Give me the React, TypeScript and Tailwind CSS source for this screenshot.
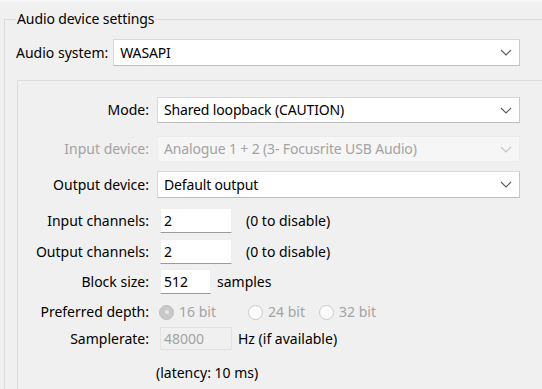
import React from "react";

const Chevron = ({ disabled }: { disabled?: boolean }) => (
  <svg width="12" height="7" viewBox="0 0 12 7" className="shrink-0">
    <path d="M1 1 L6 6 L11 1" fill="none" stroke={disabled ? "#c4c4c4" : "#5a5a5a"} strokeWidth="1.1" />
  </svg>
);

const Combo = ({ text, disabled, h = "h-[26px]" }: { text: string; disabled?: boolean; h?: string }) => (
  <div
    className={`flex-1 ${h} flex items-center justify-between pl-[6px] pr-[7px] border ${
      disabled
        ? "bg-[#f6f6f6] border-[#ececec] text-[#a3a3a3]"
        : "bg-white border-[#d9d9d9] border-b-[#bcbcbc] border-r-[#c8c8c8] text-black"
    }`}
  >
    <span className="whitespace-nowrap tracking-[-0.15px]">{text}</span>
    <Chevron disabled={disabled} />
  </div>
);

const TextBox = ({ value, w, disabled }: { value: string; w: string; disabled?: boolean }) => (
  <div
    className={`${w} h-full flex items-center pl-[3px] border ${
      disabled
        ? "bg-[#f0f0f0] border-[#e2e2e2] text-[#a3a3a3]"
        : "bg-white border-[#eeeeee] border-b-[#9a9a9a] text-black"
    }`}
  >
    {value}
  </div>
);

const Radio = ({ checked }: { checked?: boolean }) =>
  checked ? (
    <div className="w-[15px] h-[15px] rounded-full bg-[#c9c9c9] border border-[#bdbdbd] flex items-center justify-center">
      <div className="w-[4px] h-[4px] rounded-full bg-[#e8e8e8]" />
    </div>
  ) : (
    <div className="w-[15px] h-[15px] rounded-full bg-[#fbfbfb] border border-[#cbcbcb]" />
  );

const Label = ({ children, disabled }: { children: React.ReactNode; disabled?: boolean }) => (
  <div className={`w-[130px] shrink-0 text-right whitespace-nowrap ${disabled ? "text-[#a3a3a3]" : "text-black"}`}>
    {children}
  </div>
);

export default function App() {
  return (
    <div className="w-[542px] h-[389px] bg-[#f0f0f0] overflow-hidden flex flex-col font-['Noto_Sans',sans-serif] text-[14px] leading-[18px] text-black">
      <div className="h-[2px] bg-[#f6f8fb] shrink-0" />
      <fieldset className="mt-[8px] ml-[4px] flex-1 min-w-0 flex flex-col border-l border-t border-[#dcdcdc] pl-[11px]">
        <legend className="px-[1px] leading-[18px] tracking-[-0.1px]">Audio device settings</legend>
        <div className="mt-[11px] h-[27px] flex items-center mr-[22px]">
          <div className="whitespace-nowrap mr-[5px]">Audio system:</div>
          <Combo text="WASAPI" h="h-[27px]" />
        </div>
        <div className="mt-[14px] ml-[1px] flex-1 border-l border-t border-[#dcdcdc] pl-[1px] pr-[22px] pt-[16px] flex flex-col">
          <div className="h-[26px] flex items-center">
            <Label>Mode:</Label>
            <div className="ml-[8px] flex-1 flex">
              <Combo text="Shared loopback (CAUTION)" />
            </div>
          </div>
          <div className="mt-[13px] h-[26px] flex items-center">
            <Label disabled>Input device:</Label>
            <div className="ml-[8px] flex-1 flex">
              <Combo text="Analogue 1 + 2 (3- Focusrite USB Audio)" disabled />
            </div>
          </div>
          <div className="mt-[9px] h-[27px] flex items-center">
            <Label>Output device:</Label>
            <div className="ml-[8px] flex-1 flex">
              <Combo text="Default output" h="h-[27px]" />
            </div>
          </div>
          <div className="mt-[10px] h-[25px] flex items-center">
            <Label>Input channels:</Label>
            <div className="ml-[11px] h-full flex items-center">
              <TextBox value="2" w="w-[72px]" />
              <span className="ml-[14px] whitespace-nowrap">(0 to disable)</span>
            </div>
          </div>
          <div className="mt-[6px] h-[25px] flex items-center">
            <Label>Output channels:</Label>
            <div className="ml-[11px] h-full flex items-center">
              <TextBox value="2" w="w-[72px]" />
              <span className="ml-[14px] whitespace-nowrap">(0 to disable)</span>
            </div>
          </div>
          <div className="mt-[5px] h-[25px] flex items-center">
            <Label>Block size:</Label>
            <div className="ml-[11px] h-full flex items-center">
              <TextBox value="512" w="w-[51px]" />
              <span className="ml-[6px] whitespace-nowrap">samples</span>
            </div>
          </div>
          <div className="mt-[6px] h-[24px] flex items-center">
            <Label>Preferred depth:</Label>
            <div className="ml-[10px] flex items-center text-[#a3a3a3]">
              <Radio checked />
              <span className="ml-[5px] w-[69px]">16 bit</span>
              <Radio />
              <span className="ml-[5px] w-[51px]">24 bit</span>
              <Radio />
              <span className="ml-[5px]">32 bit</span>
            </div>
          </div>
          <div className="mt-[3px] h-[23px] flex items-center">
            <Label>Samplerate:</Label>
            <div className="ml-[11px] h-full flex items-center">
              <TextBox value="48000" w="w-[72px]" disabled />
              <span className="ml-[6px] whitespace-nowrap">Hz (if available)</span>
            </div>
          </div>
          <div className="mt-[13px] h-[20px] flex items-center">
            <div className="ml-[137px] whitespace-nowrap">(latency: 10 ms)</div>
          </div>
        </div>
      </fieldset>
    </div>
  );
}
